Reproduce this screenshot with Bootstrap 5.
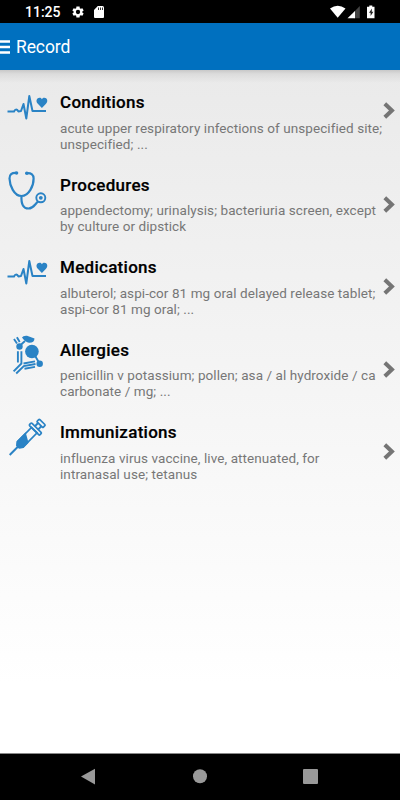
<!DOCTYPE html>
<html lang="en">
<head>
<meta charset="utf-8">
<meta name="viewport" content="width=device-width, initial-scale=1">
<title>Record</title>
<link href="https://cdn.jsdelivr.net/npm/bootstrap@5.3.0/dist/css/bootstrap.min.css" rel="stylesheet">
<style>
body{font-family:Roboto,sans-serif;width:400px;height:800px;overflow:hidden;background:#fff}
svg{display:block;flex:none}
.statusbar{height:23px;background:#000;color:#fff;padding-left:25px;padding-right:24px}
.clock{font-size:14px;line-height:23px;font-weight:500;width:46px;padding-top:1px}
.appbar{height:47px;background:#0070bf;color:#fff}
.apptitle{font-size:17.5px;line-height:47px;margin-left:6px;padding-top:1px;letter-spacing:-.1px}
.records{background:linear-gradient(#c8c8c8 0,#dcdcdc 4px,rgba(234,234,234,0) 13px),linear-gradient(#eaeaea,#fff 90%);padding-top:10px}
.record{height:82.5px}
.record-title{font-size:17px;line-height:20px;font-weight:500;letter-spacing:.28px;color:#000;padding-top:12px;margin:0;-webkit-text-stroke:.2px #000}
.record-text{font-size:13.5px;line-height:16px;letter-spacing:.075px;color:#777;margin:7.5px 0 0;white-space:nowrap}
.chev{margin-top:33px;margin-right:5px}
.record:first-child .chev{margin-top:21.500px}
.blue{color:#2a83c5}
.softkeys{height:47px;background:#000;border-top:1px solid #888}
</style>
<script src="https://cdn.jsdelivr.net/npm/bootstrap@5.3.0/dist/js/bootstrap.bundle.min.js"></script>
</head>
<body class="d-flex flex-column">
<svg width="0" height="0" class="d-none">
<symbol id="pulse" viewBox="0 0 60 60"><path d="M7.500 31.500H14Q16 27.500 18.500 31.500L21 31L23.500 24L26.300 38.500L29.300 16L32.500 31H46" fill="none" stroke="currentColor" stroke-width="2" stroke-linejoin="round"/><path d="M41.900 28L37.800 23.800C35.300 21 36.900 17.800 39.500 17.800C41 17.800 41.600 18.500 41.900 19.300C42.200 18.500 42.900 17.800 44.400 17.800C47.100 17.800 48.500 21 46 23.800Z" fill="currentColor"/></symbol>
<symbol id="chevron" viewBox="0 0 12 17"><path d="M1.800 1.800L8.900 8.500L1.800 15.200" fill="none" stroke="#757575" stroke-width="4"/></symbol>
</svg>
<header class="statusbar d-flex align-items-center">
<div class="clock">11:25</div>
<svg width="14" height="14" viewBox="0 0 24 24" fill="#fff"><path d="M19.400 13a7.500 7.500 0 0 0 0-2l2.300-1.700-2.200-3.900-2.700 1.100-1.700-1L14.700 2.500H9.300l-.4 3-1.700 1-2.700-1.100-2.200 3.900L4.600 11a7.500 7.500 0 0 0 0 2l-2.300 1.700 2.200 3.900 2.700-1.100 1.700 1 .4 3h5.400l.4-3 1.700-1 2.700 1.100 2.200-3.900zM12 8.300a3.700 3.700 0 1 1 0 7.400 3.700 3.700 0 0 1 0-7.400z" fill-rule="evenodd"/></svg>
<svg class="ms-2" width="12" height="14" viewBox="0 0 12 14"><path d="M4.800 1H9.500q1.500 0 1.500 1.500V12q0 1-1 1H2q-1 0-1-1V5z" fill="#fff"/><path d="M5.500 2.500v2.500M7.500 2.500v2.500M9.500 2.500v2.500" stroke="#222" stroke-width=".9"/></svg>
<svg class="ms-auto" width="46" height="14" viewBox="0 0 46 14"><path d="M0 3.500Q7.700-2 15.500 3.500L7.700 12.800Z" fill="#fff"/><path d="M29.800 1V13.200H24V7Z" fill="#444"/><path d="M25 6V13.200H17.500Z" fill="#fff"/><path d="M39.300 .5h3v1.200h2.200v11.500h-7.500V1.700h2.300z" fill="#fff"/><path d="M42 3.500l-3 4.300h1.600v3.200l2.800-4.300h-1.700z" fill="#222"/></svg>
</header>
<nav class="appbar d-flex align-items-center">
<svg width="10" height="16" viewBox="0 0 10 16"><path d="M0 2.500H10M0 8H10M0 13.500H10" stroke="#fff" stroke-width="2.500"/></svg>
<div class="apptitle">Record</div>
</nav>
<main class="records flex-grow-1">
<div class="record d-flex">
<svg class="blue" width="60" height="60"><use href="#pulse"/></svg>
<div class="flex-grow-1"><h2 class="record-title">Conditions</h2><p class="record-text">acute upper respiratory infections of unspecified site;<br>unspecified; ...</p></div>
<svg class="chev" width="12" height="17"><use href="#chevron"/></svg>
</div>
<div class="record d-flex">
<svg class="blue" width="60" height="60" viewBox="0 2.500 60 60" fill="none" stroke="currentColor"><path d="M16.500 12.500C11.500 12.200 9.500 14 9.500 18C9.700 25 14 35.500 21.500 35.500C29 35.500 33.700 25 33.600 18C33.500 14 31.500 12.500 27 12.700M21.500 35.500C21 44 23.500 48 28.500 48C33.500 48 34.500 44 38 41" stroke-width="2.200"/><circle cx="16.500" cy="12.500" r="1.800" fill="currentColor" stroke="none"/><circle cx="26.800" cy="12.700" r="1.800" fill="currentColor" stroke="none"/><circle cx="40.800" cy="37.300" r="4.500" stroke-width="1.900"/><circle cx="40.800" cy="37.300" r="1.900" fill="currentColor" stroke="none"/></svg>
<div class="flex-grow-1"><h2 class="record-title">Procedures</h2><p class="record-text">appendectomy; urinalysis; bacteriuria screen, except<br>by culture or dipstick</p></div>
<svg class="chev" width="12" height="17"><use href="#chevron"/></svg>
</div>
<div class="record d-flex">
<svg class="blue" width="60" height="60"><use href="#pulse"/></svg>
<div class="flex-grow-1"><h2 class="record-title">Medications</h2><p class="record-text">albuterol; aspi-cor 81 mg oral delayed release tablet;<br>aspi-cor 81 mg oral; ...</p></div>
<svg class="chev" width="12" height="17"><use href="#chevron"/></svg>
</div>
<div class="record d-flex">
<svg class="blue" width="60" height="60" viewBox="0 2.500 60 60" fill="none" stroke="currentColor"><path d="M14 13.500L17 18M16.900 11.800L19.700 16.500M19.500 20.500L25 15.500M17.900 25.800V37M21.400 25.800V38L13.600 45.800M16.200 48L23.800 40.600L35.500 38.500M24.500 43.200L35 41.400M23.500 38L35 35.900M35.500 31L39.500 38" stroke-width="1.900"/><g fill="currentColor" stroke="none"><circle cx="19.500" cy="21" r="3.200"/><circle cx="31.900" cy="26" r="6.800"/><circle cx="39.700" cy="38.200" r="3.200"/><path d="M22 12Q23 10 27 10.300L34.500 13Q34.500 17.300 29 17.200Q25.500 17 22 12Z"/></g></svg>
<div class="flex-grow-1"><h2 class="record-title">Allergies</h2><p class="record-text">penicillin v potassium; pollen; asa / al hydroxide / ca<br>carbonate / mg; ...</p></div>
<svg class="chev" width="12" height="17"><use href="#chevron"/></svg>
</div>
<div class="record d-flex">
<svg class="blue" width="60" height="60" viewBox="0 0 60 60"><g transform="translate(9.700 45) rotate(-45.300)" fill="none" stroke="currentColor" stroke-width="1.700"><path d="M0 0H13" stroke-width="2"/><path d="M12 -1.500L15 -3.900H35V3.900H15L12 1.500Z"/><path d="M12 -1.500L15 -3.900H26L21.500 3.900H15L12 1.500Z" fill="currentColor"/><rect x="34.800" y="-7.300" width="3.400" height="14.600" rx="1"/><path d="M38 -2.300H43M38 2.300H43" stroke-width="2"/><rect x="42.800" y="-4.300" width="3.600" height="8.600" rx=".8"/></g></svg>
<div class="flex-grow-1"><h2 class="record-title">Immunizations</h2><p class="record-text">influenza virus vaccine, live, attenuated, for<br>intranasal use; tetanus</p></div>
<svg class="chev" width="12" height="17"><use href="#chevron"/></svg>
</div>
</main>
<footer class="softkeys">
<svg width="400" height="46" viewBox="0 0 400 46" fill="#999"><path d="M81 22.500L95 14.800V30.500Z"/><circle cx="200" cy="22.300" r="7"/><rect x="303" y="15" width="15" height="15" rx="1"/></svg>
</footer>
</body>
</html>
